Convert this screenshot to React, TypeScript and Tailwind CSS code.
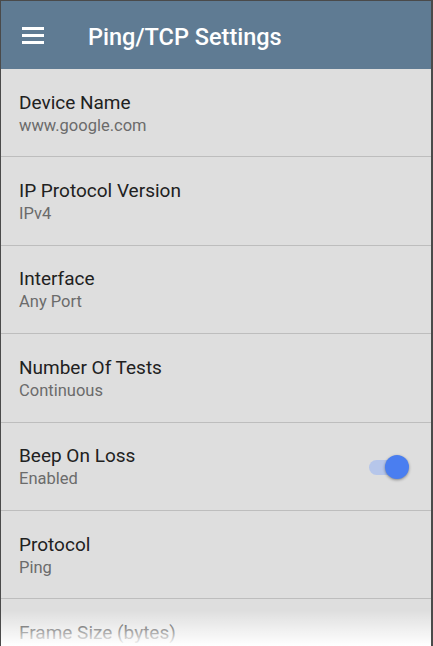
const rows = [
  { title: 'Device Name', value: 'www.google.com' },
  { title: 'IP Protocol Version', value: 'IPv4' },
  { title: 'Interface', value: 'Any Port' },
  { title: 'Number Of Tests', value: 'Continuous' },
  { title: 'Beep On Loss', value: 'Enabled', toggle: true },
  { title: 'Protocol', value: 'Ping' },
  { title: 'Frame Size (bytes)', value: '64' },
];

const App = () => {
  return (
    <div className="w-[433px] h-[646px] overflow-hidden bg-[#dedede] border-t border-l border-r-2 border-[#4a4a4a] relative font-['Roboto',sans-serif]">
      <header className="h-[68px] bg-[#5f7b93] flex items-center px-[21px]">
        <div className="flex flex-col gap-[4px] w-[22px]">
          <span className="block h-[3px] bg-white" />
          <span className="block h-[3px] bg-white" />
          <span className="block h-[3px] bg-white" />
        </div>
        <h1 className="ml-[44px] mt-[6px] text-white text-[23.5px] font-medium">Ping/TCP Settings</h1>
      </header>

      <div>
        {rows.map((r) => (
          <div
            key={r.title}
            className="h-[88.4px] border-b border-[#bdbdbd] flex items-center justify-between pl-[18px] pr-[24px] pt-[2px]"
          >
            <div className="flex flex-col">
              <span className="text-[19px] leading-[24px] text-[#212121]">{r.title}</span>
              <span className="text-[16.5px] leading-[22px] text-[#6b6b6b]">{r.value}</span>
            </div>
            {r.toggle && (
              <div className="relative w-[38px] h-[24px] flex items-center">
                <div className="w-[32px] h-[15px] rounded-full bg-[#b6c6ea]" />
                <div className="absolute right-[-2px] top-0 w-[24px] h-[24px] rounded-full bg-[#4a7ef0] shadow-[0_1px_3px_rgba(0,0,0,0.4)]" />
              </div>
            )}
          </div>
        ))}
      </div>

      <div className="absolute left-0 right-0 bottom-0 h-[36px] bg-gradient-to-b from-white/0 to-white" />
    </div>
  );
};

export default App;
